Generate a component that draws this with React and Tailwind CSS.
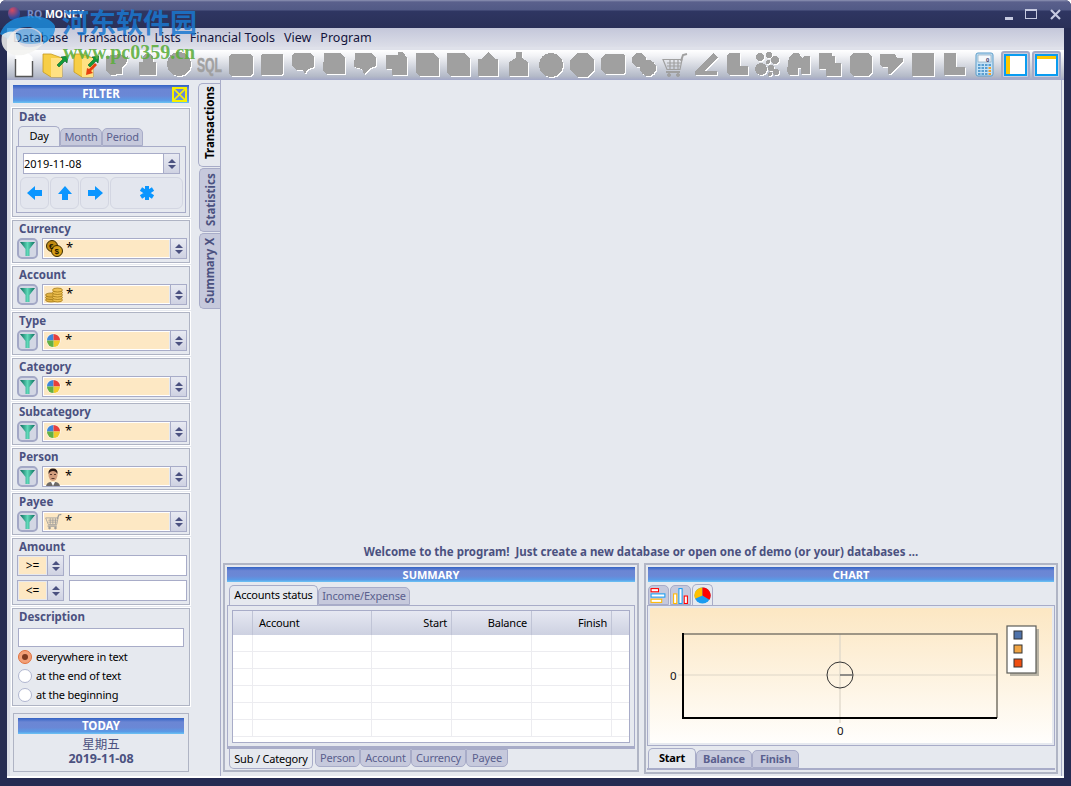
import React from "react";

const headBar = "bg-[linear-gradient(#3262c4_0%,#6b86d4_25%,#6a88d6_60%,#5a9ae6_85%,#6cc4f4_100%)]";

// white copy under a grey copy, same as a disabled toolbar bitmap
function Ghost({ children }) {
  return (
    <svg width="26" height="26" viewBox="0 0 26 26" shapeRendering="crispEdges">
      <g fill="#fff" transform="translate(1 1)">{children}</g>
      <g fill="#a0a0a0">{children}</g>
    </svg>
  );
}

const ghostShapes = [
  <path d="M2 4 L16 2 L22 5 L24 4 L22 12 L18 15 L18 22 L6 23 L2 18 Z" />,
  <path d="M8 10 V6 Q8 2 13 2 Q18 2 18 6 V10 H21 V23 H4 V10 Z" />,
  <circle cx="13" cy="12" r="12" />,
  null,
  <path d="M5 2 H20 Q25 2 25 6 V20 Q25 24 20 24 H5 Q1 24 1 20 V6 Q1 2 5 2 Z" />,
  <rect x="2" y="2" width="22" height="21" rx="2" />,
  <path d="M4 1 H20 L24 4 V15 L18 17 L15 22 L13 18 L7 18 L2 14 V3 Z" />,
  <path d="M3 1 H19 L24 5 V22 H5 L2 19 Z" />,
  <path d="M3 1 H19 L24 5 V14 L18 16 L12 22 L10 17 L2 15 Z" />,
  <path d="M3 3 H15 V0 H20 L24 6 V23 H9 V17 H3 Z" />,
  <path d="M2 1 H19 L25 6 V24 H5 L2 20 Z" />,
  <path d="M2 1 H19 L25 6 V24 H5 L2 20 Z" />,
  <path d="M12 0 L19 7 H22 V24 H2 V7 H5 Z" />,
  <path d="M9 0 H15 V6 L21 10 V24 H2 V10 L9 6 Z" />,
  <circle cx="13" cy="13" r="12" />,
  <path d="M8 1 H18 L25 8 V18 L18 25 H8 L1 18 V8 Z" />,
  <path d="M5 2 H22 Q25 2 25 5 V20 L23 22 H5 L1 18 V6 Z" />,
  <g>
    <circle cx="8" cy="8" r="7" />
    <circle cx="17" cy="16" r="8" />
  </g>,
  null,
  <path d="M20 1 L25 5 L12 19 H24 V23 H2 V19 Z" />,
  <path d="M5 1 H16 V14 H24 V23 H5 L3 20 V3 Z" />,
  <g>
    <circle cx="5" cy="5" r="4" />
    <circle cx="14" cy="3" r="3" />
    <circle cx="20" cy="8" r="4" />
    <circle cx="13" cy="10" r="2" />
    <circle cx="6" cy="17" r="6" />
    <circle cx="16" cy="16" r="3" />
    <circle cx="21" cy="20" r="3" />
    <circle cx="15" cy="22" r="2" />
  </g>,
  <path d="M3 5 L8 1 H13 L16 6 L19 4 H24 V22 H15 V16 H12 V23 H3 L1 19 Z" />,
  <path d="M2 1 H15 V4 H18 V11 H24 V24 H9 V17 H2 Z" />,
  <path d="M5 1 H20 L24 5 V21 L20 24 H5 L2 21 V5 Z" />,
  <path d="M1 2 H16 L18 6 H24 V9 L12 22 H9 V15 H3 L1 12 Z" />,
  <rect x="2" y="1" width="22" height="23" />,
  <path d="M3 1 H15 V15 H24 V23 H3 Z" />,
];

function SqlIcon() {
  return (
    <svg width="26" height="26" viewBox="0 0 26 26">
      <text x="0" y="20" fontFamily="Liberation Sans" fontWeight="700" fontSize="20" textLength="25" lengthAdjust="spacingAndGlyphs" fill="#a0a0a0" stroke="#a0a0a0" strokeWidth="0.5">
        SQL
      </text>
    </svg>
  );
}

function GhostCart({ size = 26, color = "#a0a0a0" }) {
  return (
    <svg width={size} height={size} viewBox="0 0 26 26" fill="none" stroke={color}>
      <path d="M1 7.5 H20 L18 17.5 H5 Z M5 11 H19 M5 14 H18 M8 8 V17 M12 8 V17 M16 8 V17" strokeWidth="1.2" />
      <path d="M19 9 L21 3 L25 2" strokeWidth="2" />
      <path d="M4 20 H18" strokeWidth="2" />
      <circle cx="7" cy="23" r="1.5" fill={color} />
      <circle cx="16" cy="23" r="1.5" fill={color} />
    </svg>
  );
}

function DocIcon() {
  return (
    <svg width="22" height="28" viewBox="0 0 22 28">
      <path d="M2.5 2 H15 L19.5 6 V25.5 H2.5 Z" fill="#fff" />
      <path d="M2.5 8 V25.5 H19.5 V10" fill="none" stroke="#555" strokeWidth="1.4" />
    </svg>
  );
}

function FolderIcon({ back }) {
  return (
    <svg width="26" height="28" viewBox="0 0 26 28">
      <path d="M1 3 H9 L20 7 V26 L9 26 L1 21 Z" fill="#f7ce46" stroke="#c69a20" strokeWidth="0.8" />
      <path d="M9 7 L20 7 V26 H9 Z" fill="#ffe183" />
      <path d="M15 14 L21 8 L19 6 L26 5 L25 12 L23 10 L17 16 Z" fill="#129a3a" stroke="#0b5f26" strokeWidth="0.6" />
      {back && <path d="M24 14 L18 20 L20 22 L13 24 L14 17 L16 18 L22 12 Z" fill="#e6400f" />}
    </svg>
  );
}

function CalcIcon() {
  return (
    <svg width="20" height="26" viewBox="0 0 20 26">
      <rect x="1" y="1" width="17" height="23" rx="2" fill="#c4e2f6" stroke="#5c9cc8" />
      <rect x="3" y="3" width="13" height="7" fill="#f4f8fb" stroke="#7a98b0" strokeWidth="0.6" />
      <text x="11" y="9.5" fontSize="6" fontWeight="700" fontFamily="Liberation Sans" fill="#336">0</text>
      {[12, 15, 18, 21].map((y) =>
        [3, 6.5, 10, 13.5].map((x) => (
          <rect key={`${x}${y}`} x={x} y={y} width="2.5" height="2" fill={x > 13 && y > 14 ? "#f0a030" : "#5a9ed0"} />
        ))
      )}
    </svg>
  );
}

function PaneButton({ top }) {
  return (
    <div className="w-[29px] h-[28px] rounded-[3px] border-2 border-[#a4aac8] bg-[#c9cede] flex items-center justify-center">
      <div className="relative w-[23px] h-[22px] bg-white border-2 border-[#0a9cf0] border-b-[#0a9cf0]">
        {top ? (
          <div className="absolute left-0 right-0 top-0 h-[3px] bg-[#ffc800]" />
        ) : (
          <div className="absolute left-0 top-0 bottom-0 w-[4px] bg-[#ffc800]" />
        )}
      </div>
    </div>
  );
}

function Funnel() {
  return (
    <button className="w-[21px] h-[21px] rounded-[5px] border-2 border-[#a3a8c6] bg-[#d3d7e4] flex items-center justify-center shrink-0">
      <svg width="15" height="16" viewBox="0 0 15 16">
        <defs>
          <linearGradient id="fun" x1="0" x2="1" y1="0" y2="0">
            <stop offset="0" stopColor="#07695a" />
            <stop offset="0.5" stopColor="#5fd8b8" />
            <stop offset="1" stopColor="#07705c" />
          </linearGradient>
        </defs>
        <path d="M0 1 H15 L9.5 8 V15 H5.5 V8 Z" fill="url(#fun)" />
      </svg>
    </button>
  );
}

function Spin({ w = "w-[16px]" }) {
  return (
    <div className={`${w} shrink-0 self-stretch flex flex-col items-center justify-center gap-[2px] bg-[linear-gradient(#e8eaf2,#cfd2e2)] border-l border-[#a8acc8]`}>
      <div className="w-0 h-0 border-x-[4px] border-x-transparent border-b-[4px] border-b-[#4b5180]" />
      <div className="w-0 h-0 border-x-[4px] border-x-transparent border-t-[4px] border-t-[#4b5180]" />
    </div>
  );
}

function PieBall() {
  return (
    <svg width="15" height="15" viewBox="0 0 16 16">
      <circle cx="8" cy="8" r="7.5" fill="#fff" />
      <path d="M8 8 V1 A7 7 0 0 0 1 8 Z" fill="#3f86d8" />
      <path d="M8 8 V1 A7 7 0 0 1 15 8 Z" fill="#e8403a" />
      <path d="M8 8 H15 A7 7 0 0 1 8 15 Z" fill="#f0c828" />
      <path d="M8 8 V15 A7 7 0 0 1 1 8 Z" fill="#62b044" />
    </svg>
  );
}

function Coins() {
  return (
    <svg width="17" height="17" viewBox="0 0 17 17">
      <circle cx="6" cy="6" r="5.5" fill="#c08a10" stroke="#3a2a00" />
      <circle cx="11" cy="11" r="5.5" fill="#d8a018" stroke="#3a2a00" />
      <text x="3" y="9" fontSize="8" fontWeight="700" fontFamily="Liberation Sans" fill="#201400">€</text>
      <text x="8.5" y="14" fontSize="8" fontWeight="700" fontFamily="Liberation Sans" fill="#201400">$</text>
    </svg>
  );
}

function Stack() {
  return (
    <svg width="18" height="16" viewBox="0 0 18 16">
      {[13, 10.5, 8].map((y) => (
        <ellipse key={y} cx="6" cy={y} rx="5.5" ry="2" fill="#e0b040" stroke="#9a7010" strokeWidth="0.7" />
      ))}
      {[13, 10.5, 8, 5.5, 3].map((y) => (
        <ellipse key={y} cx="12.5" cy={y} rx="5" ry="2" fill="#eec050" stroke="#9a7010" strokeWidth="0.7" />
      ))}
    </svg>
  );
}

function Face() {
  return (
    <svg width="16" height="18" viewBox="0 0 16 18">
      <path d="M1 18 Q2 14 6 14 H10 Q14 14 15 18 Z" fill="#6d6a68" />
      <path d="M6 14 L8 18 L10 14 Z" fill="#fff" />
      <ellipse cx="8" cy="7" rx="4.5" ry="6" fill="#d29d7c" />
      <path d="M3.5 6 Q3 0.5 8 0.5 Q13 0.5 12.5 6 Q11 3 8 3 Q5 3 3.5 6 Z" fill="#2a1a14" />
      <path d="M5 6.5 H7 M9 6.5 H11 M6.5 10.5 H9.5" stroke="#3a2018" strokeWidth="0.8" />
    </svg>
  );
}

function Group({ title, children, className = "" }) {
  return (
    <section className={`w-[178px] border border-[#afb4c4] shadow-[0_0_0_1px_#fff] ${className}`}>
      {title && <div className="pl-[6px] h-[16px] text-[11.5px] leading-[15px] font-bold text-[#4b5180]">{title}</div>}
      {children}
    </section>
  );
}

function FilterRow({ title, icon, left = "pl-[3px]", h = "h-[43px]" }) {
  return (
    <Group title={title} className={h}>
      <div className="flex items-center pl-[4px] pr-[2px] gap-[4px] mt-px">
        <Funnel />
        <div className="flex-1 h-[21px] flex border border-[#a8acc8] shadow-[inset_0_0_0_1px_#fff]">
          <div className={`flex-1 m-px flex items-center ${left} gap-[3px] bg-[#fde8c4] text-[13px] text-black`}>
            <span className="w-[18px] flex justify-center">{icon}</span>
            <span className="leading-[14px] -mt-[3px]">*</span>
          </div>
          <Spin />
        </div>
      </div>
    </Group>
  );
}

function AmountRow({ sign }) {
  return (
    <div className="flex items-center h-[21px] pl-[4px] pr-[2px] gap-[5px]">
      <div className="w-[47px] h-full flex border border-[#a8acc8]">
        <div className="flex-1 m-px bg-[#fde8c4] text-center text-[12px] leading-[17px] text-black">{sign}</div>
        <Spin />
      </div>
      <div className="flex-1 h-full bg-white border border-[#a8acc8]" />
    </div>
  );
}

function Radio({ on, label, className = "" }) {
  return (
    <div className={`flex items-center gap-[4px] h-[14px] ${className}`}>
      <div className={`w-[14px] h-[14px] rounded-full border flex items-center justify-center ${on ? "border-[#e0703c] bg-[#f2a078]" : "border-[#b0b6d0] bg-white"}`}>
        {on && <div className="w-[6px] h-[6px] rounded-full bg-[#7c3a20]" />}
      </div>
      <span className="text-[11px] tracking-[-0.2px] text-black">{label}</span>
    </div>
  );
}

function Tab({ label, active, w, bold, down }) {
  const shape = down ? "rounded-b-[5px]" : "rounded-t-[5px]";
  const state = active
    ? `bg-[#e6e9ef] text-black h-[20px] ${down ? "border-t-0 pt-[2px]" : "border-b-0 pt-px"} border-[#a8acc8]`
    : `bg-[#c6c9dc] text-[#5a5f8e] h-[18px] border-[#a8acc8]`;
  return (
    <div className={`${w} ${shape} ${state} ${bold ? "font-bold" : ""} border text-[11px] tracking-[-0.2px] leading-[16px] text-center shrink-0 whitespace-nowrap`}>
      {label}
    </div>
  );
}

function SideTab({ label, h, active }) {
  return (
    <div className={`${h} flex items-center justify-center rounded-l-[5px] border border-r-0 border-[#a8acc8] font-bold text-[11.5px] ${active ? "bg-[#e6e9ef] text-black w-[22px] pb-[4px]" : "bg-[#c6c9dc] text-[#4b5180] w-[21px]"}`}>
      <span className="-rotate-90 whitespace-nowrap">{label}</span>
    </div>
  );
}

function ChartTabIcon({ kind, active }) {
  return (
    <div className={`w-[21px] rounded-t-[5px] border border-[#a8acc8] flex items-center justify-center ${active ? "h-[21px] border-b-0 bg-[#e6e9ef]" : "h-[20px] bg-[#c6c9dc]"}`}>
      <svg width="17" height="17" viewBox="0 0 16 16">
        {kind === "h" && (
          <g>
            <rect x="1" y="1.5" width="7" height="3" fill="#fff" stroke="#f00" />
            <rect x="1" y="6.5" width="13" height="3" fill="#fff" stroke="#1a9cf0" />
            <rect x="1" y="11.5" width="10" height="3" fill="#fff" stroke="#ffb800" />
          </g>
        )}
        {kind === "v" && (
          <g>
            <rect x="1.5" y="6.5" width="3" height="9" fill="#fff" stroke="#ffb800" />
            <rect x="6.5" y="1.5" width="3" height="14" fill="#fff" stroke="#1a9cf0" />
            <rect x="11.5" y="8.5" width="3" height="7" fill="#fff" stroke="#f00" />
          </g>
        )}
        {kind === "p" && (
          <g>
            <circle cx="8" cy="8" r="7.5" fill="#1a9cf0" />
            <path d="M8 8 L8 0.5 A7.5 7.5 0 0 0 1 11 Z" fill="#ffc000" />
            <path d="M8 8 L8 0.5 A7.5 7.5 0 0 1 14.5 12 Z" fill="#f00" />
          </g>
        )}
      </svg>
    </div>
  );
}

function Chart() {
  return (
    <svg width="402" height="135" viewBox="649 608 402 135" className="block">
      <defs>
        <linearGradient id="bgc" x1="0" x2="0" y1="0" y2="1">
          <stop offset="0" stopColor="#fce7c3" />
          <stop offset="1" stopColor="#fffefc" />
        </linearGradient>
      </defs>
      <rect x="649" y="608" width="402" height="135" fill="url(#bgc)" />
      <path d="M839 634 V723 M677 675 H996" stroke="#ddd6c8" strokeWidth="1.2" />
      <path d="M682 634 H996 V718" fill="none" stroke="#7f7a6e" strokeWidth="1.6" />
      <path d="M682 633 V718 H996" fill="none" stroke="#000" strokeWidth="2" />
      <circle cx="839" cy="675" r="13" fill="none" stroke="#333" strokeWidth="1" />
      <path d="M839 675 H852" stroke="#666" strokeWidth="1.4" />
      <text x="669" y="680" fontSize="11.5" fontFamily="Noto Sans" fill="#111">0</text>
      <text x="836" y="735" fontSize="11.5" fontFamily="Noto Sans" fill="#111">0</text>
      <rect x="1009" y="629" width="29" height="47" fill="#b9b4a6" />
      <rect x="1006" y="626" width="29" height="47" fill="#fff" stroke="#5c5c58" strokeWidth="1.2" />
      <rect x="1013" y="631" width="8" height="8" fill="#4e72aa" stroke="#333" />
      <rect x="1013" y="645" width="8" height="8" fill="#f0a444" stroke="#333" />
      <rect x="1013" y="659" width="8" height="8" fill="#f04e10" stroke="#333" />
    </svg>
  );
}

const menus = ["Database", "Transaction", "Lists", "Financial Tools", "View", "Program"];
const cols = [
  { w: "w-[20px]", label: "" },
  { w: "w-[119px]", label: "Account", cls: "text-left pl-[6px]" },
  { w: "w-[80px]", label: "Start", cls: "text-right pr-[4px]" },
  { w: "w-[80px]", label: "Balance", cls: "text-right pr-[4px]" },
  { w: "w-[80px]", label: "Finish", cls: "text-right pr-[4px]" },
  { w: "flex-1", label: "" },
];

export default function App() {
  return (
    <div className="relative w-[1071px] h-[786px] overflow-hidden flex flex-col bg-[#252b52] font-['Noto_Sans',sans-serif] rounded-t-[6px]">
      {/* title bar */}
      <header className="h-[28px] shrink-0 flex items-center bg-[linear-gradient(#8f94b4_0,#5a608c_2px,#525a86_10px,#2f3662_11px,#2a3058_100%)]">
        <div className="ml-[27px] mt-[1px] text-[10.5px] font-bold text-[#7a8cc4]">
          RQ <span className="text-white">MONEY</span>
        </div>
        <div className="ml-auto mr-[10px] flex items-center gap-[10px] text-[#c6cae0]">
          <div className="w-[8px] h-[3px] mt-[8px] bg-[#c6cae0]" />
          <div className="ml-[2px] w-[12px] h-[10px] border border-t-2 border-[#c6cae0]" />
          <svg width="11" height="11" viewBox="0 0 11 11" className="ml-[3px]">
            <path d="M1 1 L10 10 M10 1 L1 10" stroke="#c6cae0" strokeWidth="2.2" />
          </svg>
        </div>
      </header>

      <div className="flex-1 mx-[7px] mb-[8px] flex flex-col min-h-0 bg-[#e6e9ef]">
        {/* menu */}
        <nav className="h-[19px] shrink-0 flex items-center pl-[6px] pt-[2px] gap-[9px] bg-[linear-gradient(#c4c7da,#dcdee8)] text-[12.5px] text-[#14143c]">
          {menus.map((m) => (
            <span key={m}>{m}</span>
          ))}
        </nav>
        <div className="h-[3px] shrink-0 bg-[#dfe1ea]" />

        {/* toolbar */}
        <div className="h-[30px] shrink-0 flex items-center pl-[1px] bg-[linear-gradient(#fff_0,#f2f3f6_20%,#b4bac8_90%,#a7acc6_100%)] border-b border-[#a4aac8]">
          <div className="w-[31px] flex justify-center"><DocIcon /></div>
          <div className="w-[31px] flex justify-center"><FolderIcon /></div>
          <div className="w-[31px] flex justify-center"><FolderIcon back /></div>
          {ghostShapes.map((shape, i) => (
            <div key={i} className="w-[31px] flex justify-center">
              {i === 3 ? <SqlIcon /> : i === 18 ? <GhostCart /> : <Ghost>{shape}</Ghost>}
            </div>
          ))}
          <div className="w-[31px] flex justify-center"><CalcIcon /></div>
          <div className="flex gap-[2px] ml-[1px]">
            <PaneButton />
            <PaneButton top />
          </div>
        </div>

        {/* body */}
        <div className="flex-1 flex min-h-0 border-b-2 border-white">
          {/* filter column */}
          <aside className="w-[191px] pl-[2px] pt-[5px] flex flex-col gap-[3px] border-l-[3px] border-[#d9dce6]">
            <div className={`relative w-[176px] ml-px h-[18px] text-center text-[11.5px] leading-[18px] font-bold text-white ${headBar}`}>
              FILTER
              <div className="absolute right-[2px] top-[2px] w-[15px] h-[15px] border-2 border-[#f6f000]">
                <svg viewBox="0 0 11 11" className="w-full h-full">
                  <path d="M0 0 L11 11 M11 0 L0 11" stroke="#f6f000" strokeWidth="1.6" />
                </svg>
              </div>
            </div>
            <Group title="Date" className="h-[109px] mt-[2px]">
              <div className="flex items-end pl-[5px] h-[20px] mt-px">
                <Tab label="Day" active w="w-[42px]" />
                <Tab label="Month" w="w-[42px]" />
                <Tab label="Period" w="w-[41px]" />
              </div>
              <div className="w-[170px] ml-[3px] h-[67px] border border-[#a8acc8] pt-[6px] pl-[3px]">
                <div className="ml-[3px] w-[157px] h-[21px] flex bg-white border border-[#a8acc8] text-[11px] leading-[19px] text-black">
                  <span className="flex-1">2019-11-08</span>
                  <Spin />
                </div>
                <div className="flex gap-px mt-[3px] h-[32px]">
                  {["left", "up", "right"].map((d) => (
                    <div key={d} className="w-[29px] rounded-[6px] border border-[#d3d6e2] bg-[#e3e6ee] flex items-center justify-center">
                      <svg width="16" height="16" viewBox="0 0 16 16" fill="#0a96ff">
                        {d === "left" && <path d="M0 8 L8 1 V5 H15 V11 H8 V15 Z" />}
                        {d === "up" && <path d="M8 1 L15 9 H11 V15 H5 V9 H1 Z" />}
                        {d === "right" && <path d="M16 8 L8 1 V5 H1 V11 H8 V15 Z" />}
                      </svg>
                    </div>
                  ))}
                  <div className="w-[73px] rounded-[6px] border border-[#d3d6e2] bg-[#e3e6ee] flex items-center justify-center">
                    <svg width="16" height="16" viewBox="0 0 16 16" stroke="#0a96ff" strokeWidth="4">
                      <path d="M8 1 V15 M2 4 L14 12 M14 4 L2 12" />
                    </svg>
                  </div>
                </div>
              </div>
            </Group>
            <FilterRow title="Currency" icon={<Coins />} left="pl-[1px]" />
            <FilterRow title="Account" icon={<Stack />} left="pl-[1px]" />
            <FilterRow title="Type" icon={<PieBall />} left="pl-0" />
            <FilterRow title="Category" icon={<PieBall />} left="pl-0" h="h-[42px]" />
            <FilterRow title="Subcategory" icon={<PieBall />} left="pl-0" h="h-[42px]" />
            <FilterRow title="Person" icon={<Face />} left="pl-0" h="h-[42px]" />
            <FilterRow title="Payee" icon={<GhostCart size={17} color="#9a9a9a" />} left="pl-0" h="h-[42px]" />
            <Group title="Amount" className="h-[67px]">
              <AmountRow sign=">=" />
              <div className="h-[4px]" />
              <AmountRow sign="<=" />
            </Group>
            <Group title="Description" className="h-[98px]">
              <div className="mx-[5px] mt-[3px] h-[19px] bg-white border border-[#a8acc8]" />
              <div className="pl-[5px] mt-[3px]">
                <Radio on label="everywhere in text" />
                <Radio label="at the end of text" className="mt-[5px]" />
                <Radio label="at the beginning" className="mt-[5px]" />
              </div>
            </Group>
            <div className="mt-[4px] ml-px w-[176px] h-[59px] border border-[#afb4c4] px-[4px] pt-[4px] text-center">
              <div className={`h-[16px] text-[11.5px] leading-[16px] font-bold text-white ${headBar}`}>TODAY</div>
              <div className="mt-[1px] text-[12.5px] leading-[17px] text-[#4b5180] font-['Noto_Sans_CJK_SC',sans-serif]">星期五</div>
              <div className="text-[12.5px] leading-[14px] font-bold text-[#4b5180]">2019-11-08</div>
            </div>
          </aside>

          {/* side tabs */}
          <div className="w-[22px] pt-[3px] flex flex-col items-end gap-px">
            <SideTab label="Transactions" h="h-[84px]" active />
            <SideTab label="Statistics" h="h-[64px]" />
            <SideTab label="Summary X" h="h-[76px]" />
          </div>

          {/* main */}
          <main className="flex-1 min-w-0 flex flex-col border-l border-r border-[#a8acc8] mr-[2px]">
            <div className="flex-1" />
            <div className="h-[14px] mb-[4px] text-center text-[11.5px] leading-[14px] font-bold text-[#4b5180]">
              Welcome to the program!&nbsp; Just create a new database or open one of demo (or your) databases ...
            </div>
            <div className="h-[213px] flex pl-[2px] gap-[5px]">
              {/* summary */}
              <section className="w-[416px] h-[209px] border-2 border-[#b0b5c5] pt-[2px] px-[2px]">
                <div className={`h-[15px] text-center text-[11px] leading-[15px] font-bold text-white ${headBar}`}>SUMMARY</div>
                <div className="flex items-end h-[21px] pl-[2px] mt-[2px]">
                  <Tab label="Accounts status" active w="w-[89px]" />
                  <Tab label="Income/Expense" w="w-[92px]" />
                </div>
                <div className="h-[142px] border border-[#a8acc8] p-[4px]">
                  <div className="h-[133px] border border-[#a8acc8] bg-white overflow-hidden">
                    <div className="h-[24px] flex bg-[linear-gradient(#e6e8f2,#cdd1e1)] text-[11px] tracking-[-0.2px] leading-[24px] text-black">
                      {cols.map((c, i) => (
                        <div key={i} className={`${c.w} ${c.cls || ""} border-r border-[#c0c4d6] last:border-r-0`}>
                          {c.label}
                        </div>
                      ))}
                    </div>
                    {[0, 1, 2, 3, 4, 5].map((r) => (
                      <div key={r} className="h-[17px] flex border-b border-[#ececf0]">
                        {cols.map((c, i) => (
                          <div key={i} className={`${c.w} border-r border-[#ececf0] last:border-r-0`} />
                        ))}
                      </div>
                    ))}
                  </div>
                </div>
                <div className="flex items-start pl-[2px] border-t-2 border-[#a8acc8]">
                  <Tab label="Sub / Category" active down w="w-[84px]" />
                  <div className="w-[2px]" />
                  <Tab label="Person" down w="w-[45px]" />
                  <Tab label="Account" down w="w-[51px]" />
                  <Tab label="Currency" down w="w-[55px]" />
                  <Tab label="Payee" down w="w-[42px]" />
                </div>
              </section>

              {/* chart */}
              <section className="w-[414px] h-[211px] border-2 border-[#b0b5c5] pt-[2px] px-[1px]">
                <div className={`h-[15px] ml-px w-[406px] text-center text-[11px] leading-[15px] font-bold text-white ${headBar}`}>CHART</div>
                <div className="flex items-end h-[21px] pl-px mt-[2px] gap-px">
                  <ChartTabIcon kind="h" />
                  <ChartTabIcon kind="v" />
                  <ChartTabIcon kind="p" active />
                </div>
                <div className="w-[408px] h-[141px] border border-[#a8acc8] p-[2px] overflow-hidden">
                  <Chart />
                </div>
                <div className="flex items-end h-[24px] pl-px border-b-2 border-[#a8acc8] w-[408px]">
                  <Tab label="Start" active bold w="w-[48px]" />
                  <Tab label="Balance" bold w="w-[56px]" />
                  <Tab label="Finish" bold w="w-[47px]" />
                </div>
              </section>
            </div>
          </main>
        </div>
      </div>

      {/* site watermark and app badge lying over the title bar */}
      <div className="absolute left-[8px] top-[7px] w-[12px] h-[13px] rounded-full bg-[radial-gradient(circle_at_35%_25%,#d84a60,#2c4aa0_65%)]" />
      <svg className="absolute left-0 top-[15px]" width="58" height="42" viewBox="0 0 58 42">
        <path d="M0 19 Q6 2 30 1 Q50 1 55 11 Q56 22 43 29 Q46 16 30 12 Q13 11 8 24 Z" fill="#1a8fe0" fillOpacity="0.8" />
        <path d="M14 20 Q20 12 32 14 Q44 18 40 28 Q30 30 22 28 Q16 26 14 20 Z" fill="#1a8fe0" fillOpacity="0.45" />
        <path d="M2 20 Q-1 35 14 40 Q30 42 43 29 Q28 35 21 30 Q15 25 16 17 Q8 15 2 20 Z" fill="#f2f2f0" fillOpacity="0.85" />
      </svg>
      <div className="absolute left-[62px] top-[6px] text-[27px] leading-[32px] font-bold text-[#1a78d0]/85 font-['Noto_Sans_CJK_SC',sans-serif] whitespace-nowrap">
        河东软件园
      </div>
      <div className="absolute left-[63px] top-[41px] text-[20px] leading-[22px] font-bold text-[#5cae3c]/90 font-['Liberation_Serif',serif] whitespace-nowrap">
        www.pc0359.cn
      </div>
    </div>
  );
}
